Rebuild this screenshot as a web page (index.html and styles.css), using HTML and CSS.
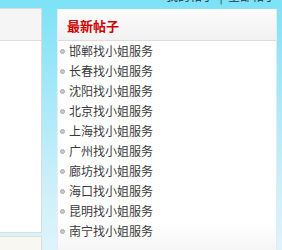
FILE: index.html
```html
<!DOCTYPE html>
<html lang="zh-CN">
<head>
    <meta charset="UTF-8">
    <title>最新帖子</title>
    <link rel="stylesheet" href="styles.css">
</head>
<body>
    <div class="top-links">我的帖子 &nbsp;|&nbsp; 全部帖子</div>

    <div class="main">
        <div class="side">
            <div class="side-box">
                <div class="side-head"></div>
            </div>
            <div class="side-box2"></div>
        </div>

        <div class="posts">
            <div class="posts-head">最新帖子</div>
            <ul class="post-list">
                <li>邯郸找小姐服务</li>
                <li>长春找小姐服务</li>
                <li>沈阳找小姐服务</li>
                <li>北京找小姐服务</li>
                <li>上海找小姐服务</li>
                <li>广州找小姐服务</li>
                <li>廊坊找小姐服务</li>
                <li>海口找小姐服务</li>
                <li>昆明找小姐服务</li>
                <li>南宁找小姐服务</li>
            </ul>
        </div>
    </div>
</body>
</html>
```

FILE: styles.css
```css
html, body {
    height: 100%;
}
body {
    margin: 0;
    overflow: hidden;
    font-family: "Noto Sans CJK SC", "Liberation Sans", sans-serif;
    font-size: 12px;
    color: #333;
    background: linear-gradient(#7ce2f6, #c9eefa 70%, #def4fb);
}
.top-links {
    height: 14px;
    line-height: 14px;
    margin-top: -11px;
    padding-right: 6px;
    text-align: right;
    color: #1d3557;
}
.main {
    display: flex;
    gap: 15px;
}
.side {
    width: 42px;
    display: flex;
    flex-direction: column;
    gap: 3px;
    margin-top: 5px;
}
.side-box {
    height: 223px;
    background: #fff;
    border: 1px solid #dcdcdc;
    border-left: none;
}
.side-head {
    height: 31px;
    background: #f5f5f5;
    border-bottom: 1px solid #dedede;
}
.side-box2 {
    height: 20px;
    background: #f8f7f2;
    border: 1px solid #dcdcdc;
    border-left: none;
}
.posts {
    width: 218px;
    height: 250px;
    margin-top: 6px;
    background: linear-gradient(#fff 85%, #f3f3f3);
    border-left: 1px solid #e6eef2;
    border-right: 1px solid #e4ecef;
}
.posts-head {
    height: 31px;
    line-height: 33px;
    padding-left: 9px;
    font-size: 13px;
    font-weight: bold;
    color: #cc0000;
    background: linear-gradient(#fcfcfc, #f1f1f1);
    border-bottom: 1px solid #dddddd;
}
.post-list {
    list-style: none;
    margin: 0;
    padding: 0;
}
.post-list li {
    display: flex;
    align-items: center;
    gap: 4px;
    height: 20px;
    line-height: 20px;
    font-size: 12px;
    color: #3a3a3a;
}
.post-list li::before {
    content: "";
    width: 3px;
    height: 3px;
    margin-left: 2px;
    border-radius: 50%;
    background: #c8c8c8;
    border: 1px solid #aaaaaa;
}
```
